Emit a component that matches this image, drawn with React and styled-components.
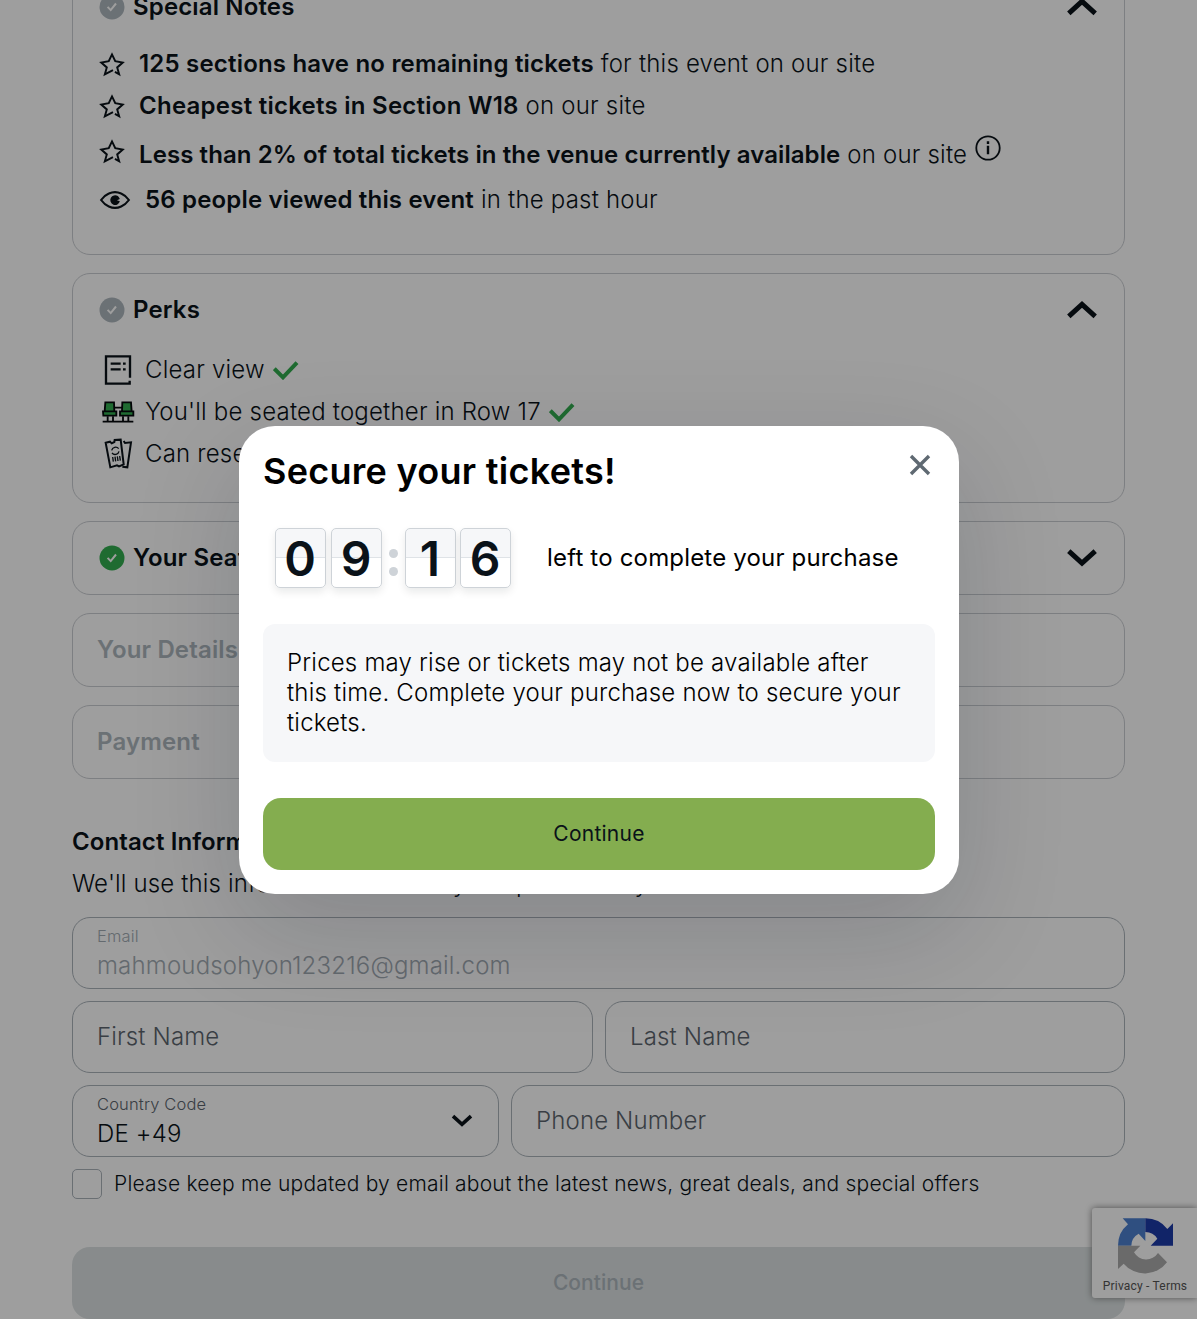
import React from 'react';
import styled, { createGlobalStyle, css } from 'styled-components';

const Global = createGlobalStyle`
  * { box-sizing: border-box; }
  html, body { margin: 0; background: #fff; }
  body { font-family: Inter, "Liberation Sans", sans-serif; overflow: hidden; color: #0a1219; }
  button, input { font: inherit; color: inherit; letter-spacing: inherit; }
`;

const Screen = styled.div`
  position: relative;
  height: 1319px;
  overflow: hidden;
  font-size: 24px;
  font-weight: 300;
  line-height: 30px;
  letter-spacing: 0.2px;
`;

const Column = styled.main`
  width: 1053px;
  margin: -30px 72px 0;
  display: flex;
  flex-direction: column;
  gap: 18px;
`;

const Card = styled.section`
  border: 1px solid #cacdd2;
  border-radius: 18px;
  height: ${(p) => p.$height || 74}px;
`;

const CardHeader = styled.header`
  height: 72px;
  padding: 0 26px 0 ${(p) => (p.$muted ? 24 : 26)}px;
  display: flex;
  align-items: center;
  justify-content: space-between;
  font-weight: 600;
  letter-spacing: 0.15px;
  color: ${(p) => (p.$muted ? '#adb6bd' : '#0a1219')};
`;

const Title = styled.div`
  display: flex;
  align-items: center;
  gap: 8px;
`;

const Rows = styled.ul`
  list-style: none;
  margin: 0;
  padding: ${(p) => (p.$tight ? 0 : 3)}px 26px 0;
`;

const Row = styled.li`
  height: ${(p) => p.$height || 42}px;
  display: flex;
  align-items: center;
  white-space: pre;
  b { font-weight: 600; letter-spacing: ${(p) => p.$strongSpacing || 0.2}px; }
`;

const IconSlot = styled.span`
  width: ${(p) => p.$width}px;
  display: flex;
  flex: none;
  padding-left: ${(p) => p.$inset || 0}px;
  padding-top: ${(p) => p.$drop || 0}px;
  padding-bottom: ${(p) => p.$lift || 0}px;
`;

const RowText = styled.span`
  padding-top: ${(p) => p.$drop || 0}px;
`;

const Trailing = styled.span`
  display: flex;
  margin-left: 8px;
  padding-bottom: ${(p) => p.$lift || 0}px;
`;

const Contact = styled.section`
  margin-top: 30px;
  display: flex;
  flex-direction: column;
  gap: 12px;
`;

const Heading = styled.h2`
  margin: 0;
  font-size: 24px;
  font-weight: 600;
  letter-spacing: 0.1px;
`;

const Hint = styled.p`
  margin: 0 0 6px;
  white-space: nowrap;
  letter-spacing: 0.15px;
`;

const Fields = styled.div`
  display: grid;
  gap: 12px;
  grid-template-columns: ${(p) => p.$columns};
`;

const Field = styled.label`
  height: 72px;
  border: 1px solid #abb3ba;
  border-radius: 18px;
  padding: 0 24px;
  display: flex;
  align-items: center;
  justify-content: space-between;
  letter-spacing: 0.15px;
  color: ${(p) => p.$color || '#5c656e'};
`;

const Stack = styled.span`
  display: flex;
  flex-direction: column;
  padding-bottom: 1px;
`;

const Small = styled.span`
  font-size: 16.5px;
  line-height: 26px;
  letter-spacing: 0.15px;
  color: ${(p) => p.$color};
`;

const Value = styled.span`
  line-height: 33px;
  letter-spacing: 0.18px;
`;

const Consent = styled.label`
  display: flex;
  align-items: center;
  gap: 12px;
  font-size: 21px;
  letter-spacing: 0.21px;
  white-space: nowrap;
`;

const Box = styled.span`
  width: 30px;
  height: 30px;
  border: 1px solid #abb3ba;
  border-radius: 5px;
`;

const Button = styled.button`
  height: 72px;
  width: 100%;
  border: 0;
  border-radius: 18px;
  font-size: 21px;
  ${(p) =>
    p.$disabled
      ? css`margin-top: 36px; background: #dbe1e2; color: #adb6bd; font-weight: 500; letter-spacing: 0.05px;`
      : css`background: #84ad4f; color: #0a1219; font-weight: 400; letter-spacing: 0.25px;`}
`;

const Badge = styled.aside`
  position: absolute;
  right: 0;
  top: 1208px;
  width: 105px;
  height: 90px;
  padding: 9px 0 0 1px;
  border-radius: 3px 0 0 3px;
  background: #fff;
  box-shadow: 0 0 7px #808080;
  display: flex;
  flex-direction: column;
  align-items: center;
  gap: 2px;
  font: 400 12px/18px Roboto, sans-serif;
  letter-spacing: 0.2px;
  color: #555;
`;

const Overlay = styled.div`
  position: absolute;
  inset: 0;
  background: rgba(0, 0, 0, 0.38);
  display: flex;
  justify-content: center;
  align-items: flex-start;
  padding-top: 426px;
`;

const Dialog = styled.div`
  width: 720px;
  height: 468px;
  margin-left: 1px;
  padding: 24px;
  border-radius: 36px;
  background: #fff;
  color: #000;
  box-shadow: 0 36px 108px rgba(10, 18, 35, 0.16);
`;

const DialogHead = styled.div`
  height: 42px;
  display: flex;
  justify-content: space-between;
  padding-right: 4px;
  h1 { margin: 0; font-size: 36px; line-height: 42px; font-weight: 600; letter-spacing: 0.28px; }
`;

const Close = styled.span`
  display: flex;
  padding-top: 4px;
`;

const TimerRow = styled.div`
  height: 60px;
  margin: 36px 0 36px 12px;
  display: flex;
  align-items: center;
  color: #000;
  font-weight: 400;
`;

const Pair = styled.div`
  display: flex;
  gap: ${(p) => p.$gap}px;
`;

const Digit = styled.span`
  width: 51px;
  height: 60px;
  border: 1px solid #ced3d8;
  border-radius: 5px;
  background: linear-gradient(#f6f7f9 0 28px, #dfe3e7 28px 29px, #fff 29px);
  box-shadow: 0 4px 8px rgba(10, 18, 25, 0.09);
  display: flex;
  align-items: center;
  justify-content: center;
  font-size: 48px;
  line-height: 58px;
  font-weight: 600;
  letter-spacing: 0;
  color: #0a1219;
  padding: 2px 1px 0 0;
`;

const Colon = styled.span`
  width: 23px;
  display: flex;
  flex-direction: column;
  align-items: center;
  gap: 9px;
  padding: 9px 1px 0 0;
  i { width: 9px; height: 9px; border-radius: 50%; background: #ced3d8; }
`;

const TimerText = styled.span`
  margin-left: 36px;
  white-space: nowrap;
  letter-spacing: 0.18px;
`;

const Note = styled.p`
  height: 138px;
  margin: 0 0 36px;
  padding: 24px;
  border-radius: 12px;
  background: #f6f7f9;
`;

const CheckCircle = ({ color }) => (
  <svg width="26" height="26" viewBox="0 0 26 26" fill="none">
    <circle cx="13" cy="13" r="12.5" fill={color} />
    <path d="M8.6 12.9l3.1 3.2 5.3-6.6" stroke="#fff" strokeWidth="2" />
  </svg>
);

const Chevron = ({ up }) => (
  <svg width="32" height="20" viewBox="0 0 32 20" fill="none">
    <path d={up ? 'M2.8 16.3L16 4.3l13.2 12' : 'M2.8 3.2L16 15.2l13.2-12'} stroke="#0a1219" strokeWidth="5" />
  </svg>
);

const Star = () => (
  <svg width="26" height="25" viewBox="116 156 80 76" fill="none" stroke="#0a1219" strokeWidth="6">
    <path d="M165 217l13 7-6-21 17-15-23-4-10-21-10 21-23 4 17 15-6 21 25-13" />
  </svg>
);

const Eye = () => (
  <svg width="32" height="22" viewBox="116 567 98 68" fill="none">
    <path d="M122 601q10-14 24-20 19-9 38 0 14 6 24 20-10 14-24 20-19 9-38 0-14-6-24-20z" stroke="#0a1219" strokeWidth="6.5" />
    <path d="M174 589a15 15 0 1 0 6 16l-9-3 9-4q-2-4-6-9z" fill="#0a1219" />
  </svg>
);

const Info = () => (
  <svg width="26" height="26" viewBox="0 0 26 26" fill="none" stroke="#0a1219">
    <circle cx="13" cy="13" r="11.7" strokeWidth="1.8" />
    <path d="M13 10.8v8.4M13 6.3v2.6" strokeWidth="2.4" />
  </svg>
);

const Doc = () => (
  <svg width="30" height="32" viewBox="42 222 90 96" fill="none" stroke="#0a1219" strokeWidth="7">
    <path d="M120 293v-64H48v82h71v-9M62 251h30M99 251h8M62 268h30M99 268h8" />
  </svg>
);

const Seats = () => (
  <svg width="34" height="24" viewBox="33 359 102 72" stroke="#05090c" strokeWidth="5.5">
    <path d="M38 424h92M72 382h28M53 408v15M69 408v15M99 408v15M115 408v15" />
    <path d="M46 366h26l1 27H44zM97 366h26l2 27H96zM39 393h40v13H40zM90 393h40v13H90z" fill="#32ad4f" />
  </svg>
);

const Tickets = () => (
  <svg width="30" height="33" viewBox="41 474 90 99" fill="none" stroke="#0a1219" strokeWidth="6">
    <path d="M46 488l13-3 5 5 8-4 1-6 18-1 9 74-14 6-6-3-20 6z" />
    <path d="M100 483l4 6 18-2-11 75-15-2" />
    <path d="M64 511a12 12 0 0 1 21-5M86 514a12 12 0 0 1-21 5M67 531l2 14M74 530l2 14M81 529l2 14M88 528l2 14" strokeWidth="4" />
  </svg>
);

const Tick = () => (
  <svg width="26" height="20" viewBox="548 241 78 60" fill="none">
    <path d="M552 267l26 26 42-44" stroke="#32ad4f" strokeWidth="12" />
  </svg>
);

const Captcha = () => (
  <svg width="57" height="58" viewBox="200 142 171 174">
    <path d="M203 228a82 82 0 0 1 30-64l-16-18h68v68l-20-22a42 42 0 0 0-22 36z" fill="#4c80cf" />
    <path d="M285 146a83 83 0 0 1 66 32l17-17v67h-67l20-21a42 42 0 0 0-36-20z" fill="#1c3aa9" />
    <path d="M203 228h67l-19 20a42 42 0 0 0 72 2l27 28a83 83 0 0 1-130 4l-17 16z" fill="#ababab" />
  </svg>
);

const notes = [
  ['125 sections have no remaining tickets', ' for this event on our site', 0.2],
  ['Cheapest tickets in Section W18', ' on our site', 0.25],
];

const perks = [
  { icon: <Doc />, inset: 5, text: 'Clear view' },
  { icon: <Seats />, inset: 2, text: "You'll be seated together in Row 17" },
  { icon: <Tickets />, inset: 5, text: 'Can resell' },
];

export default function App() {
  return (
    <Screen>
      <Global />
      <Column>
        <Card $height={285}>
          <CardHeader>
            <Title><CheckCircle color="#adb6bd" />Special Notes</Title>
            <Chevron up />
          </CardHeader>
          <Rows $tight>
            {notes.map(([strong, rest, spacing]) => (
              <Row key={strong} $strongSpacing={spacing}>
                <IconSlot $width={40} $drop={1}><Star /></IconSlot>
                <RowText><b>{strong}</b>{rest}</RowText>
              </Row>
            ))}
            <Row $height={52} $strongSpacing={0.08}>
              <IconSlot $width={40} $lift={3}><Star /></IconSlot>
              <RowText $drop={4}><b>Less than 2% of total tickets in the venue currently available</b> on our site</RowText>
              <Trailing $lift={10}><Info /></Trailing>
            </Row>
            <Row $strongSpacing={0.17}>
              <IconSlot $width={46}><Eye /></IconSlot>
              <RowText><b>56 people viewed this event</b> in the past hour</RowText>
            </Row>
          </Rows>
        </Card>
        <Card $height={230}>
          <CardHeader>
            <Title><CheckCircle color="#adb6bd" />Perks</Title>
            <Chevron up />
          </CardHeader>
          <Rows>
            {perks.map((perk) => (
              <Row key={perk.text}>
                <IconSlot $width={46} $inset={perk.inset}>{perk.icon}</IconSlot>
                <RowText>{perk.text}</RowText>
                <Trailing><Tick /></Trailing>
              </Row>
            ))}
          </Rows>
        </Card>
        <Card>
          <CardHeader>
            <Title><CheckCircle color="#32ad4f" />Your Seats</Title>
            <Chevron />
          </CardHeader>
        </Card>
        <Card><CardHeader $muted>Your Details</CardHeader></Card>
        <Card><CardHeader $muted>Payment</CardHeader></Card>

        <Contact>
          <Heading>Contact Information</Heading>
          <Hint>We'll use this information to send you updates on your order</Hint>
          <Field $color="#a2abb3">
            <Stack><Small>Email</Small><Value>mahmoudsohyon123216@gmail.com</Value></Stack>
          </Field>
          <Fields $columns="521px 1fr">
            <Field>First Name</Field>
            <Field>Last Name</Field>
          </Fields>
          <Fields $columns="427px 1fr">
            <Field $color="#0a1219">
              <Stack><Small $color="#5c656e">Country Code</Small><Value>DE +49</Value></Stack>
              <svg width="24" height="16" viewBox="0 0 24 16" fill="none">
                <path d="M3 3.2l9 8.2 9-8.2" stroke="#0a1219" strokeWidth="3.6" />
              </svg>
            </Field>
            <Field>Phone Number</Field>
          </Fields>
          <Consent><Box />Please keep me updated by email about the latest news, great deals, and special offers</Consent>
          <Button $disabled>Continue</Button>
        </Contact>
      </Column>

      <Badge><Captcha /><span>Privacy - Terms</span></Badge>

      <Overlay>
        <Dialog role="dialog">
          <DialogHead>
            <h1>Secure your tickets!</h1>
            <Close>
              <svg width="22" height="22" viewBox="0 0 22 22" fill="none">
                <path d="M2 2l18 18M20 2L2 20" stroke="#5f6972" strokeWidth="3.4" />
              </svg>
            </Close>
          </DialogHead>
          <TimerRow>
            <Pair $gap={5}><Digit>0</Digit><Digit>9</Digit></Pair>
            <Colon><i /><i /></Colon>
            <Pair $gap={4}><Digit>1</Digit><Digit>6</Digit></Pair>
            <TimerText>left to complete your purchase</TimerText>
          </TimerRow>
          <Note>Prices may rise or tickets may not be available after this time. Complete your purchase now to secure your tickets.</Note>
          <Button>Continue</Button>
        </Dialog>
      </Overlay>
    </Screen>
  );
}
